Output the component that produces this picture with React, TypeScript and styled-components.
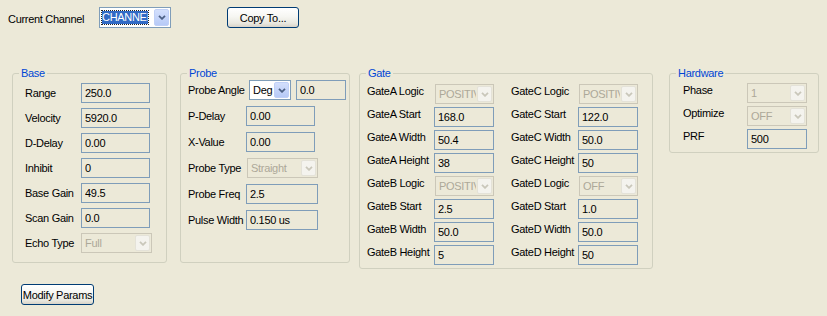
import React from 'react';
import styled, { createGlobalStyle } from 'styled-components';

const GlobalStyle = createGlobalStyle`
  html, body {
    margin: 0;
    padding: 0;
    background: #ECE9D8;
  }
  body {
    font-family: "Liberation Sans", Arial, sans-serif;
    font-size: 11px;
    letter-spacing: -0.3px;
    color: #000;
  }
`;

const Page = styled.div`
  width: 827px;
  height: 316px;
  display: flex;
  flex-direction: column;
  overflow: hidden;
`;

const TopBar = styled.div`
  display: flex;
  align-items: flex-start;
  padding: 7px 0 0 8px;
  height: 21px;
`;

const TopLabel = styled.span`
  width: 91px;
  margin-top: 5px;
  line-height: 14px;
  white-space: nowrap;
`;

const XpButton = styled.button<{ $w: number; $ml?: number }>`
  width: ${(p) => p.$w}px;
  height: 21px;
  margin-left: ${(p) => p.$ml ?? 0}px;
  padding: 0;
  border: 1px solid #003c74;
  border-radius: 3px;
  background: linear-gradient(180deg, #ffffff 0%, #f6f6f2 45%, #e9e8e0 80%, #d8d3c8 100%);
  font: inherit;
  letter-spacing: inherit;
  color: #000;
  white-space: nowrap;
`;

const GroupsRow = styled.div`
  display: flex;
  align-items: flex-start;
  margin-top: 39px;
  padding-left: 12px;
`;

const Group = styled.fieldset<{ $w: number; $h: number; $ml?: number }>`
  box-sizing: border-box;
  width: ${(p) => p.$w}px;
  height: ${(p) => p.$h}px;
  margin: 0 0 0 ${(p) => p.$ml ?? 0}px;
  padding: 0;
  min-width: 0;
  border: 1px solid #d0d0bf;
  border-radius: 3px;
`;

const Title = styled.legend`
  margin-left: 6px;
  padding: 0 2px;
  line-height: 12px;
  color: #0046d5;
`;

const GroupBody = styled.div<{ $pt: number; $pl: number; $gap: number }>`
  display: flex;
  gap: 17px;
  padding: ${(p) => p.$pt}px 0 0 ${(p) => p.$pl}px;
`;

const Stack = styled.div<{ $gap: number }>`
  display: flex;
  flex-direction: column;
  gap: ${(p) => p.$gap}px;
`;

const Field = styled.div<{ $align: string }>`
  display: flex;
  align-items: ${(p) => p.$align};
  height: 20px;
`;

const Label = styled.span<{ $w: number }>`
  width: ${(p) => p.$w}px;
  flex-shrink: 0;
  line-height: 14px;
  white-space: nowrap;
`;

const TextBox = styled.input<{ $w: number; $ml?: number }>`
  box-sizing: border-box;
  width: ${(p) => p.$w}px;
  height: 20px;
  margin: 0 0 0 ${(p) => p.$ml ?? 0}px;
  padding: 0 0 0 3px;
  border: 1px solid #7f9db9;
  background: #ece9d8;
  font: inherit;
  letter-spacing: inherit;
  color: #000;
  outline: none;
`;

const ComboBox = styled.div<{ $w: number; $h?: number; $ml?: number; $disabled?: boolean }>`
  box-sizing: border-box;
  display: flex;
  align-items: stretch;
  width: ${(p) => p.$w}px;
  height: ${(p) => p.$h ?? 20}px;
  margin-left: ${(p) => p.$ml ?? 0}px;
  border: 1px solid ${(p) => (p.$disabled ? '#cbc7b8' : '#7f9db9')};
  background: ${(p) => (p.$disabled ? '#ece9d8' : '#ffffff')};
  flex-shrink: 0;
`;

const ComboText = styled.span<{ $disabled?: boolean }>`
  flex: 1;
  min-width: 0;
  overflow: hidden;
  white-space: nowrap;
  padding-left: 3px;
  display: flex;
  align-items: center;
  color: ${(p) => (p.$disabled ? '#aca899' : '#000')};
`;

const Selected = styled.span`
  display: block;
  width: 46px;
  margin-left: -1px;
  overflow: hidden;
  line-height: 13px;
  background: #316ac5;
  color: #fff;
  outline: 1px dotted #222;
  outline-offset: 0;
`;

const DropButton = styled.span<{ $disabled?: boolean }>`
  box-sizing: border-box;
  width: 15px;
  margin: 1px;
  display: flex;
  align-items: center;
  justify-content: center;
  border-radius: 2px;
  border: 1px solid ${(p) => (p.$disabled ? '#e4e2d8' : '#c0d0f7')};
  background: ${(p) =>
    p.$disabled ? '#f4f3ee' : 'linear-gradient(180deg, #d3dffc 0%, #b7caf7 100%)'};
  color: ${(p) => (p.$disabled ? '#c9c7ba' : '#4d6185')};
`;

const Footer = styled.div`
  margin-top: 15px;
  padding-left: 21px;
`;

const Chevron = () => (
  <svg width="8" height="5" viewBox="0 0 8 5">
    <path d="M1 0.8 L4 3.8 L7 0.8" fill="none" stroke="currentColor" strokeWidth="1.8" />
  </svg>
);

type ComboProps = { text: React.ReactNode; w: number; h?: number; ml?: number; disabled?: boolean };

const Combo = ({ text, w, h, ml, disabled }: ComboProps) => (
  <ComboBox $w={w} $h={h} $ml={ml} $disabled={disabled}>
    <ComboText $disabled={disabled}>{text}</ComboText>
    <DropButton $disabled={disabled}>
      <Chevron />
    </DropButton>
  </ComboBox>
);

type Item = {
  label: string;
  value: string;
  w: number;
  combo?: boolean;
  enabled?: boolean;
  ml?: number;
  extra?: string;
};

const renderControl = (it: Item) =>
  it.combo ? (
    <Combo text={it.value} w={it.w} ml={it.ml} disabled={!it.enabled} />
  ) : (
    <TextBox readOnly value={it.value} $w={it.w} $ml={it.ml} />
  );

const FieldList = ({ items, labelW, gap, align }: { items: Item[]; labelW: number; gap: number; align: string }) => (
  <Stack $gap={gap}>
    {items.map((it) => (
      <Field key={it.label} $align={align}>
        <Label $w={labelW}>{it.label}</Label>
        {renderControl(it)}
        {it.extra !== undefined && <TextBox readOnly value={it.extra} $w={50} $ml={5} />}
      </Field>
    ))}
  </Stack>
);

const baseItems: Item[] = [
  { label: 'Range', value: '250.0', w: 69 },
  { label: 'Velocity', value: '5920.0', w: 69 },
  { label: 'D-Delay', value: '0.00', w: 69 },
  { label: 'Inhibit', value: '0', w: 69 },
  { label: 'Base Gain', value: '49.5', w: 69 },
  { label: 'Scan Gain', value: '0.0', w: 69 },
  { label: 'Echo Type', value: 'Full', w: 71, combo: true },
];

const probeItems: Item[] = [
  { label: 'Probe Angle', value: 'Deg', w: 42, combo: true, enabled: true, ml: 3, extra: '0.0' },
  { label: 'P-Delay', value: '0.00', w: 69 },
  { label: 'X-Value', value: '0.00', w: 69 },
  { label: 'Probe Type', value: 'Straight', w: 71, combo: true, ml: 1 },
  { label: 'Probe Freq', value: '2.5', w: 72 },
  { label: 'Pulse Width', value: '0.150 us', w: 72 },
];

const gateLeft: Item[] = [
  { label: 'GateA Logic', value: 'POSITIVE', w: 59, combo: true, ml: 1 },
  { label: 'GateA Start', value: '168.0', w: 60 },
  { label: 'GateA Width', value: '50.4', w: 60 },
  { label: 'GateA Height', value: '38', w: 60 },
  { label: 'GateB Logic', value: 'POSITIVE', w: 59, combo: true, ml: 1 },
  { label: 'GateB Start', value: '2.5', w: 60 },
  { label: 'GateB Width', value: '50.0', w: 60 },
  { label: 'GateB Height', value: '5', w: 60 },
];

const gateRight: Item[] = [
  { label: 'GateC Logic', value: 'POSITIVE', w: 59, combo: true, ml: 1 },
  { label: 'GateC Start', value: '122.0', w: 60 },
  { label: 'GateC Width', value: '50.0', w: 60 },
  { label: 'GateC Height', value: '50', w: 60 },
  { label: 'GateD Logic', value: 'OFF', w: 59, combo: true, ml: 1 },
  { label: 'GateD Start', value: '1.0', w: 60 },
  { label: 'GateD Width', value: '50.0', w: 60 },
  { label: 'GateD Height', value: '50', w: 60 },
];

const hardwareItems: Item[] = [
  { label: 'Phase', value: '1', w: 60, combo: true },
  { label: 'Optimize', value: 'OFF', w: 60, combo: true },
  { label: 'PRF', value: '500', w: 60 },
];

const App: React.FC = () => {
  return (
    <Page>
      <GlobalStyle />
      <TopBar>
        <TopLabel>Current Channel</TopLabel>
        <Combo text={<Selected>CHANNEL</Selected>} w={72} h={21} disabled={false} ml={0} />
        <XpButton $w={72} $ml={56}>Copy To...</XpButton>
      </TopBar>

      <GroupsRow>
        <Group $w={155} $h={196}>
          <Title>Base</Title>
          <GroupBody $pt={4} $pl={12} $gap={0}>
            <FieldList items={baseItems} labelW={56} gap={5} align="center" />
          </GroupBody>
        </Group>

        <Group $w={170} $h={196} $ml={13}>
          <Title>Probe</Title>
          <GroupBody $pt={1} $pl={7} $gap={0}>
            <FieldList items={probeItems} labelW={58} gap={6} align="center" />
          </GroupBody>
        </Group>

        <Group $w={294} $h={202} $ml={9}>
          <Title>Gate</Title>
          <GroupBody $pt={5} $pl={7} $gap={17}>
            <FieldList items={gateLeft} labelW={67} gap={3} align="flex-start" />
            <FieldList items={gateRight} labelW={67} gap={3} align="flex-start" />
          </GroupBody>
        </Group>

        <Group $w={150} $h={86} $ml={16}>
          <Title>Hardware</Title>
          <GroupBody $pt={4} $pl={13} $gap={0}>
            <FieldList items={hardwareItems} labelW={64} gap={3} align="flex-start" />
          </GroupBody>
        </Group>
      </GroupsRow>

      <Footer>
        <XpButton $w={73}>Modify Params</XpButton>
      </Footer>
    </Page>
  );
};

export default App;
